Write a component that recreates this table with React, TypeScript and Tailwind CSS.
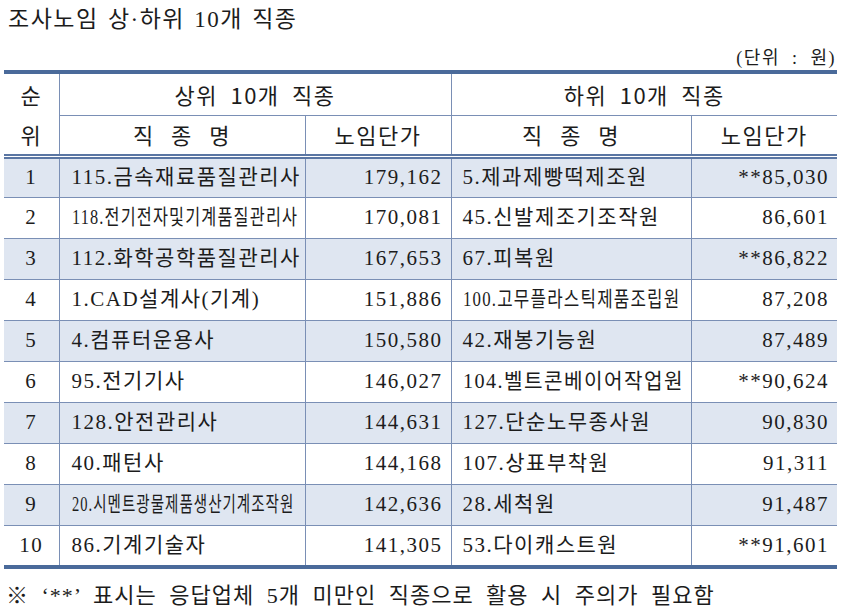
import React from 'react';

interface Row {
  rank: number;
  topName: string;
  topScale?: string;
  topPrice: string;
  lowName: string;
  lowScale?: string;
  lowPrice: string;
}

const rows: Row[] = [
  { rank: 1, topName: '115.금속재료품질관리사', topPrice: '179,162', lowName: '5.제과제빵떡제조원', lowPrice: '**85,030' },
  { rank: 2, topName: '118.전기전자및기계품질관리사', topScale: 'scale-x-[0.775]', topPrice: '170,081', lowName: '45.신발제조기조작원', lowPrice: '86,601' },
  { rank: 3, topName: '112.화학공학품질관리사', topPrice: '167,653', lowName: '67.피복원', lowPrice: '**86,822' },
  { rank: 4, topName: '1.CAD설계사(기계)', topPrice: '151,886', lowName: '100.고무플라스틱제품조립원', lowScale: 'scale-x-[0.80]', lowPrice: '87,208' },
  { rank: 5, topName: '4.컴퓨터운용사', topPrice: '150,580', lowName: '42.재봉기능원', lowPrice: '87,489' },
  { rank: 6, topName: '95.전기기사', topPrice: '146,027', lowName: '104.벨트콘베이어작업원', lowScale: 'scale-x-[0.96]', lowPrice: '**90,624' },
  { rank: 7, topName: '128.안전관리사', topPrice: '144,631', lowName: '127.단순노무종사원', lowPrice: '90,830' },
  { rank: 8, topName: '40.패턴사', topPrice: '144,168', lowName: '107.상표부착원', lowPrice: '91,311' },
  { rank: 9, topName: '20.시멘트광물제품생산기계조작원', topScale: 'scale-x-[0.69]', topPrice: '142,636', lowName: '28.세척원', lowPrice: '91,487' },
  { rank: 10, topName: '86.기계기술자', topPrice: '141,305', lowName: '53.다이캐스트원', lowPrice: '**91,601' },
];

function Name({ text, scale }: { text: string; scale?: string }) {
  if (!scale) return <span className="whitespace-nowrap">{text}</span>;
  return <span className={`inline-block whitespace-nowrap origin-left ${scale}`}>{text}</span>;
}

export default function App() {
  return (
    <div className="w-[843px] h-[613px] bg-white text-[#1c1c1c] font-['Liberation_Serif','Noto_Sans_CJK_KR',serif] overflow-hidden">
      {/* title */}
      <div className="pl-[8px] pt-[5px] h-[46px] text-[23px] leading-[30px] tracking-[1.5px] [word-spacing:2px]">
        조사노임 상·하위 10개 직종
      </div>
      <div className="pr-[7px] h-[24px] text-right text-[18px] leading-[24px] tracking-[1.5px] [word-spacing:6px]">
        (단위 : 원)
      </div>

      <table className="ml-[4px] w-[833px] table-fixed border-collapse border-t-[4px] border-b-[4px] border-[#4a6a9a]">
        <colgroup>
          <col className="w-[55px]" />
          <col className="w-[246px]" />
          <col className="w-[146px]" />
          <col className="w-[240px]" />
          <col className="w-[146px]" />
        </colgroup>
        <thead className="font-['Noto_Sans_CJK_KR',sans-serif] text-[22px] tracking-[1.5px]">
          <tr className="h-[41px]">
            <td rowSpan={2} className="text-center border-r border-[#7a8fb5] border-b-[5px] border-b-[#5a76a3] border-double leading-[40px]">
              순<br />위
            </td>
            <td colSpan={2} className="text-center border-r border-b border-[#7a8fb5] [word-spacing:6px]">
              상위 10개 직종
            </td>
            <td colSpan={2} className="text-center border-b border-[#7a8fb5] [word-spacing:6px]">
              하위 10개 직종
            </td>
          </tr>
          <tr className="h-[39px]">
            <td className="text-center border-r border-[#7a8fb5] border-b-[5px] border-b-[#5a76a3] border-double [word-spacing:10px]">직 종 명</td>
            <td className="text-center border-r border-[#7a8fb5] border-b-[5px] border-b-[#5a76a3] border-double">노임단가</td>
            <td className="text-center border-r border-[#7a8fb5] border-b-[5px] border-b-[#5a76a3] border-double [word-spacing:10px]">직 종 명</td>
            <td className="text-center border-b-[5px] border-b-[#5a76a3] border-double">노임단가</td>
          </tr>
        </thead>
        <tbody className="text-[21px] tracking-[1.5px]">
          {rows.map((r, i) => (
            <tr key={r.rank} className={`h-[41px] ${i % 2 === 0 ? 'bg-[#dfe6f1]' : 'bg-white'}`}>
              <td className={`text-center border-r border-[#7a8fb5] ${i < 9 ? 'border-b' : ''}`}>{r.rank}</td>
              <td className={`pl-[12px] overflow-hidden border-r border-[#7a8fb5] ${i < 9 ? 'border-b' : ''}`}>
                <Name text={r.topName} scale={r.topScale} />
              </td>
              <td className={`pr-[8px] text-right border-r border-[#7a8fb5] ${i < 9 ? 'border-b' : ''}`}>{r.topPrice}</td>
              <td className={`pl-[11px] overflow-hidden border-r border-[#7a8fb5] ${i < 9 ? 'border-b' : ''}`}>
                <Name text={r.lowName} scale={r.lowScale} />
              </td>
              <td className={`pr-[8px] text-right border-[#7a8fb5] ${i < 9 ? 'border-b' : ''}`}>{r.lowPrice}</td>
            </tr>
          ))}
        </tbody>
      </table>

      <div className="pl-[6px] pt-[14px] text-[22px] leading-[26px] tracking-[1px] [word-spacing:6px] whitespace-nowrap">
        ※ ‘**’ 표시는 응답업체 5개 미만인 직종으로 활용 시 주의가 필요함
      </div>
    </div>
  );
}
